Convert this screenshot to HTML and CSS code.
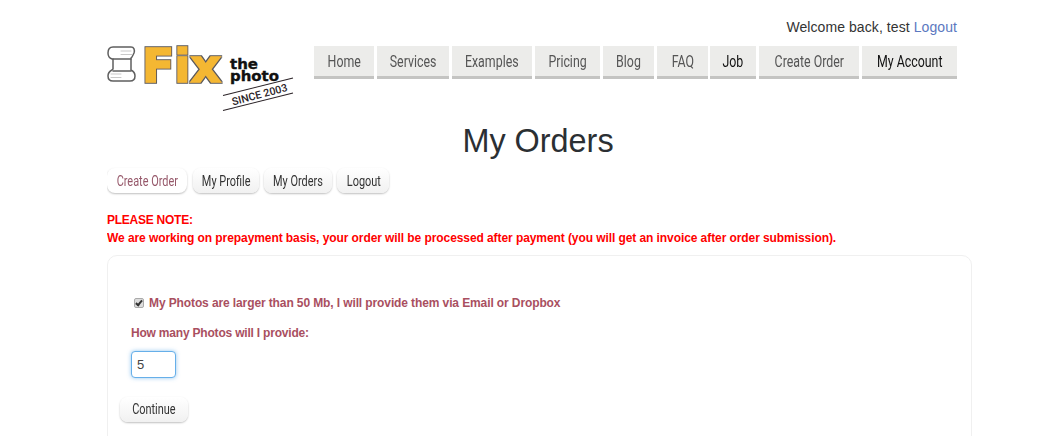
FILE: index.html
```html
<!DOCTYPE html>
<html lang="en">
<head>
<meta charset="utf-8">
<title>My Orders</title>
<link rel="stylesheet" href="styles.css">
</head>
<body>
<div class="page">
  <header class="header">
    <p class="welcome">Welcome back, test <a href="#">Logout</a></p>
    <div class="header-row">
      <svg class="logo" width="207" height="66" viewBox="0 0 207 66" aria-label="Fix the photo since 2003">
        <defs>
          <filter id="outline" x="-5%" y="-5%" width="110%" height="110%">
            <feMorphology in="SourceAlpha" operator="dilate" radius="0.7" result="grown"/>
            <feFlood flood-color="#5a5a5a"/>
            <feComposite in2="grown" operator="in" result="edge"/>
            <feMerge><feMergeNode in="edge"/><feMergeNode in="SourceGraphic"/></feMerge>
          </filter>
        </defs>
        <g fill="none" stroke="#5f5f5f" stroke-width="1.5" stroke-linejoin="round" stroke-linecap="round">
          <path d="M6 1H24c3 0 4 3 3 6l-2 4-1 1v12c2 1 4 3 4 6 0 3-2 5-5 5H6c-3 0-5-2-5-5s2-5 4-6l1-1V13H5C2 12 1 10 1 7 1 3 3 1 6 1z" fill="#fff"/>
          <path d="M6 13H24M6 25H24"/>
          <path d="M14 5h10M14 8.500h11M4 28h10M4 31.500h10" stroke="#c9c9c9" stroke-width="1"/>
        </g>
        <text class="logo-fix" filter="url(#outline)" x="35" y="36" textLength="79" lengthAdjust="spacingAndGlyphs">Fix</text>
        <text class="logo-the" x="123" y="22.500" textLength="28" lengthAdjust="spacingAndGlyphs">the</text>
        <text class="logo-the" x="123" y="35" textLength="49" lengthAdjust="spacingAndGlyphs">photo</text>
        <g stroke="#2a2226" stroke-width="1.1">
          <line x1="116" y1="49.500" x2="186" y2="32"/>
          <line x1="116" y1="64.500" x2="186" y2="47"/>
        </g>
        <text class="logo-since" transform="translate(126 59.500) rotate(-15)" textLength="57" lengthAdjust="spacingAndGlyphs">SINCE 2003</text>
      </svg>
      <nav class="nav">
        <a href="#"><span>Home</span></a>
        <a href="#"><span>Services</span></a>
        <a href="#"><span>Examples</span></a>
        <a href="#"><span>Pricing</span></a>
        <a href="#"><span>Blog</span></a>
        <a href="#"><span>FAQ</span></a>
        <a href="#" class="dark nav-job"><span>Job</span></a>
        <a href="#"><span>Create Order</span></a>
        <a href="#" class="dark"><span>My Account</span></a>
      </nav>
    </div>
  </header>
  <h1 class="title">My Orders</h1>
  <div class="tabs">
    <a href="#" class="btn btn-active"><span>Create Order</span></a>
    <a href="#" class="btn"><span>My Profile</span></a>
    <a href="#" class="btn"><span>My Orders</span></a>
    <a href="#" class="btn"><span>Logout</span></a>
  </div>
  <p class="note"><span class="note-head">PLEASE NOTE:</span><br>We are working on prepayment basis, your order will be processed after payment (you will get an invoice after order submission).</p>
  <form class="card">
    <label class="check"><input type="checkbox" checked><span>My Photos are larger than 50 Mb, I will provide them via Email or Dropbox</span></label>
    <label class="count-label" for="count">How many Photos will I provide:</label>
    <input class="count" id="count" type="text" value="5">
    <div class="actions"><a href="#" class="btn btn-continue"><span>Continue</span></a></div>
  </form>
</div>
</body>
</html>
```
FILE: styles.css
```css
html, body { margin: 0; height: 436px; overflow: hidden; background: #fff; }
body { font-family: "Liberation Sans", Arial, sans-serif; color: #333; }
.page { width: 865px; margin-left: 107px; height: 436px; overflow: hidden; }
.header { height: 113px; padding-top: 18px; box-sizing: border-box; }
.welcome { margin: 0 15px 0 0; text-align: right; font-size: 14px; letter-spacing: .08px; line-height: 18px; color: #333; }
.welcome a { color: #5b78c0; text-decoration: none; }
.header-row { display: flex; margin-top: 10px; }
.logo { display: block; flex: none; width: 207px; height: 66px; overflow: visible; }
.logo-fix { font-family: "DejaVu Sans", sans-serif; font-weight: 700; font-size: 47px; fill: #f4b733; stroke: #f4b733; stroke-width: 1.6; }
.logo-the { font-family: "DejaVu Sans", sans-serif; font-weight: 700; font-size: 14px; fill: #111; stroke: #111; stroke-width: .35; }
.logo-since { font-family: "Roboto", sans-serif; font-weight: 500; font-size: 10.5px; fill: #2a2226; }
.nav { display: grid; grid-template-columns: 60px 72px 80px 65px 51px 51px 45px 100px 95px; column-gap: 3px; height: 33px; }
.nav a { display: flex; align-items: center; justify-content: center; height: 30px; border-bottom: 3px solid #c4c4c2; background: #ececea; font-family: "Roboto", sans-serif; font-size: 16.500px; color: #555; text-decoration: none; white-space: nowrap; }
.nav a span { display: inline-block; transform: scaleX(.75); }
.nav a.dark { color: #111; }
.nav a.nav-job { margin-left: -1px; }
.title { margin: 0; font-weight: 400; font-size: 32.400px; line-height: 56px; height: 55px; text-align: center; color: #2b2f33; padding-right: 3px; }
.tabs { display: flex; gap: 5px; }
.btn { display: flex; align-items: center; justify-content: center; height: 25px; border-radius: 8px; background: linear-gradient(#fff, #f1f1f1); box-shadow: 0 1px 2px rgba(0,0,0,.25); font-family: "Roboto", sans-serif; font-size: 14px; color: #333; text-decoration: none; white-space: nowrap; }
.btn span { display: inline-block; transform: scaleX(.78); }
.tabs .btn:nth-child(1) { width: 80px; margin-right: 1px; }
.tabs .btn:nth-child(2) { width: 66px; }
.tabs .btn:nth-child(3) { width: 68px; }
.tabs .btn:nth-child(4) { width: 52px; padding-left: 2px; box-sizing: border-box; }
.btn.btn-active { color: #96586a; background: #fff; }
.note { margin: 18px 0 0; font-size: 12px; font-weight: 700; letter-spacing: -.08px; line-height: 18px; color: #f00; }
.note-head { letter-spacing: -.25px; }
.card { margin-top: 8px; height: 240px; box-sizing: border-box; border: 1px solid #f0f0f0; border-radius: 10px; padding: 38px 12px 0 11px; }
.check { display: flex; align-items: center; margin-left: 15px; font-size: 12px; font-weight: 700; letter-spacing: -.11px; color: #a94f5f; line-height: 18px; }
.check input { appearance: none; -webkit-appearance: none; position: relative; flex: none; width: 10px; height: 10px; margin: 0 5px 0 0; border: 1px solid #aaa; border-radius: 2px; box-sizing: border-box; background: #ddd; }
.check input::after { content: ""; position: absolute; left: 2px; top: 0; width: 2px; height: 5px; border: solid #333; border-width: 0 2px 2px 0; transform: rotate(40deg); }
.count-label { display: block; margin: 12px 0 0 12px; font-size: 12px; font-weight: 700; letter-spacing: -.2px; line-height: 18px; color: #a94f5f; }
.count { display: block; width: 45px; height: 27px; margin: 9px 0 0 12px; box-sizing: border-box; padding: 0 5px; border: 1px solid #66afe9; border-radius: 4px; outline: none; box-shadow: 0 0 4px rgba(102,175,233,.7); font-family: "Liberation Sans", sans-serif; font-size: 13px; color: #444; }
.actions { margin-top: 19px; display: flex; padding-left: 1px; }
.btn-continue { width: 68px; padding-bottom: 2px; box-sizing: border-box; color: #333; }
```
